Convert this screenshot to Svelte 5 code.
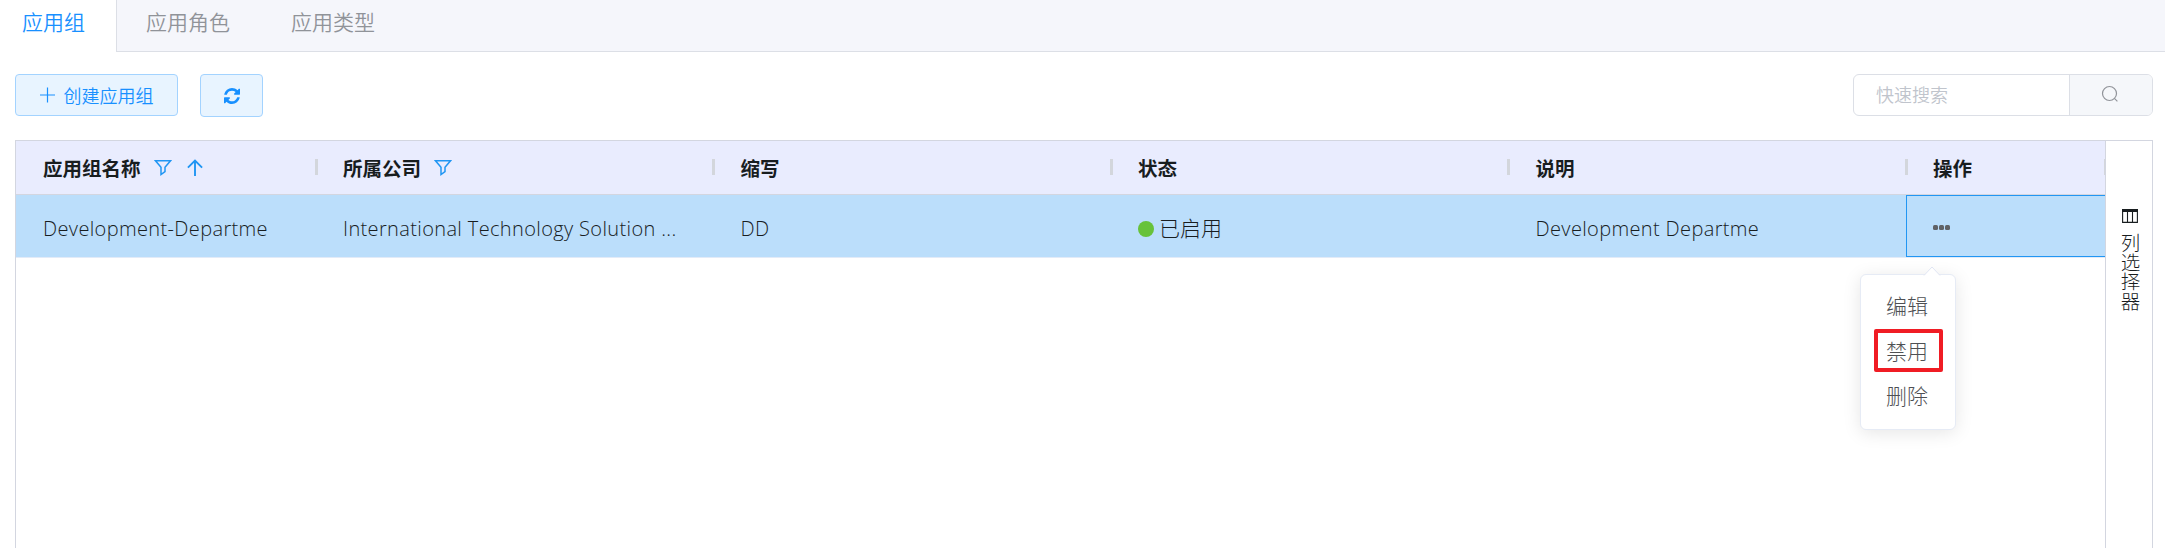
<script>
  const tabs = ['应用组', '应用角色', '应用类型'];
  const columns = [
    { title: '应用组名称', filter: true, sort: true, value: 'Development-Departme' },
    { title: '所属公司', filter: true, value: 'International Technology Solution ...' },
    { title: '缩写', value: 'DD' },
    { title: '状态', value: '已启用', status: true },
    { title: '说明', value: 'Development Departme' },
    { title: '操作', actions: true }
  ];
  const menu = ['编辑', '禁用', '删除'];
</script>

<div class="page">
  <nav class="tabs">
    {#each tabs as tab, i}
      <div class="tab" class:active={i === 0}>{tab}</div>
    {/each}
  </nav>

  <div class="toolbar">
    <button class="btn create">
      <svg width="16" height="16" viewBox="0 0 16 16"><path d="M7.500 .5v15M0 8h15" stroke="currentColor" stroke-width="1.2" fill="none" /></svg>
      <span>创建应用组</span>
    </button>
    <button class="btn refresh" aria-label="refresh">
      <svg width="16" height="16" viewBox="0 0 1536 1536"><path fill="currentColor" d="M1511 928q0 5-1 7-64 268-268 434.500T764 1536q-146 0-282.500-55T238 1324l-129 129q-19 19-45 19t-45-19-19-45V960q0-26 19-45t45-19h448q26 0 45 19t19 45-19 45l-137 137q71 66 161 102t187 36q134 0 250-65t186-179q11-17 53-117 8-23 30-23h192q13 0 22.500 9.500t9.500 22.500zm25-800v448q0 26-19 45t-45 19h-448q-26 0-45-19t-19-45 19-45l138-138Q969 256 768 256q-134 0-250 65T332 500q-11 17-53 117-8 23-30 23H50q-13 0-22.500-9.500T18 608v-7q65-268 270-434.500T768 0q146 0 284 55.500T1297 212l130-129q19-19 45-19t45 19 19 45z" /></svg>
    </button>
    <div class="search">
      <div class="field">快速搜索</div>
      <div class="go">
        <svg width="18" height="18" viewBox="0 0 18 18" fill="none" stroke="#909399" stroke-width="1.2"><circle cx="8.500" cy="8.500" r="7" /><path d="m13.400 13.400 3 3" /></svg>
      </div>
    </div>
  </div>

  <div class="grid">
    <div class="table">
      <div class="row head">
        {#each columns as col}
          <div class="cell">
            <span class="title">{col.title}</span>
            {#if col.filter}
              <svg class="filter" width="18" height="17" viewBox="0 0 18 17" fill="none" stroke="#2196f3" stroke-width="1.5"><path d="M1.500 1.800h15L11 8.300v4.200l-4 3V8.300z" /></svg>
            {/if}
            {#if col.sort}
              <svg class="sort" width="16" height="17" viewBox="0 0 16 17" fill="none" stroke="#2196f3" stroke-width="1.900"><path d="M8 17V2M.9 8.700 8 1.600l7.100 7.100" /></svg>
            {/if}
          </div>
        {/each}
      </div>
      <div class="row data">
        {#each columns as col}
          <div class="cell" class:focus={col.actions}>
            {#if col.actions}
              <div class="more"><i></i><i></i><i></i></div>
              <div class="menu">
                <svg class="caret" width="18" height="10" viewBox="0 0 18 10"><path d="M1 9.500 9 1l8 8.500" fill="#fff" stroke="#e0e5f3" /></svg>
                {#each menu as item, i}
                  <div class="item"><span class:marked={i === 1}>{item}</span></div>
                {/each}
              </div>
            {:else}
              {#if col.status}<i class="dot"></i>{/if}
              <span class="value" class:cjk={col.status}>{col.value}</span>
            {/if}
          </div>
        {/each}
      </div>
    </div>
    <aside class="side">
      <svg width="16" height="14" viewBox="0 0 16 14"><path d="M.6 1.500h14.800v11.900H.6zM5.500 3v10.500M10.500 3v10.500" fill="none" stroke="#181d1f" stroke-width="1.100" /><path d="M0 0h16v3H0z" fill="#181d1f" /></svg>
      <span>列选择器</span>
    </aside>
  </div>
</div>

<style>
  :global(body) { margin: 0; overflow: hidden; background: #fff; }
  .page {
    height: 548px;
    display: flex;
    flex-direction: column;
    overflow: hidden;
    font-family: 'Open Sans', 'Noto Sans CJK SC', sans-serif;
    font-weight: 350;
  }
  svg { display: block; flex: none; }
  .tabs {
    display: flex;
    height: 51px;
    flex: none;
    background: #f5f6fb;
    border-bottom: 1px solid #dcdfe6;
  }
  .tab {
    height: 43px;
    line-height: 43px;
    padding: 0 32px 0 29px;
    font-size: 21px;
    font-family: 'Noto Sans CJK SC', sans-serif;
    color: #909399;
  }
  .tab.active {
    width: 94px;
    height: 52px;
    padding: 0 0 0 22px;
    background: #fff;
    color: #1890ff;
    border-right: 1px solid #dcdfe6;
  }
  .toolbar {
    display: flex;
    flex: none;
    align-items: flex-start;
    padding: 22px 12px 0 15px;
    height: 88px;
    box-sizing: border-box;
  }
  .btn {
    display: flex;
    align-items: center;
    justify-content: center;
    box-sizing: border-box;
    padding: 0;
    border: 1px solid #a3d3ff;
    border-radius: 4px;
    background: #e8f4ff;
    color: #1890ff;
    font: 350 18px 'Noto Sans CJK SC', sans-serif;
  }
  .create { width: 163px; height: 42px; gap: 8px; }
  .refresh { width: 63px; height: 43px; margin-left: 22px; }
  .search {
    display: flex;
    margin-left: auto;
    width: 300px;
    height: 42px;
    box-sizing: border-box;
    border: 1px solid #dcdfe6;
    border-radius: 6px;
    overflow: hidden;
  }
  .field {
    flex: 1;
    padding-left: 22px;
    font: 350 18px/38px 'Noto Sans CJK SC', sans-serif;
    color: #c0c4cc;
  }
  .go {
    width: 83px;
    border-left: 1px solid #dcdfe6;
    background: #f5f7fa;
    display: flex;
    align-items: center;
    justify-content: center;
    padding: 0 2px 2px 0;
    box-sizing: border-box;
  }
  .grid {
    display: flex;
    flex: none;
    height: 420px;
    margin: 0 12px 0 15px;
    border: 1px solid #d3d6e0;
    box-sizing: border-box;
  }
  .table { width: 2089px; flex: none; }
  .row {
    display: grid;
    grid-template-columns: 300px repeat(4, 397.5px) 199px;
  }
  .head { height: 53px; background: #e9ecfe; border-bottom: 1px solid #d3d6e0; }
  .data { height: 62px; background: #bbdefb; border-bottom: 1px solid #e2ebf8; }
  .cell {
    display: flex;
    align-items: center;
    box-sizing: border-box;
    padding-left: 27px;
    min-width: 0;
    color: #181d1f;
    white-space: nowrap;
  }
  .head .cell {
    position: relative;
    font: 700 19.5px 'Noto Sans CJK SC', sans-serif;
  }
  .head .title { padding-bottom: 1px; }
  .head .cell::after {
    content: '';
    position: absolute;
    right: -1.5px;
    top: 18px;
    width: 3px;
    height: 16px;
    background: #d3d6dc;
  }
  .head .cell:last-child::after { right: 0; width: 1px; }
  .filter { margin: 0 0 1px 13px; }
  .sort { margin-left: 15px; }
  .value { font-size: 20px; padding-top: 5px; letter-spacing: 0.36px; }
  .value.cjk {
    font-family: 'Noto Sans CJK SC', sans-serif;
    font-size: 21px;
    font-weight: 300;
    padding-top: 2px;
    letter-spacing: 0;
  }
  .dot { width: 16px; height: 16px; border-radius: 50%; background: #67c23a; margin: 6px 5px 0 0; }
  .focus {
    position: relative;
    border: 1px solid #2196f3;
    border-right: 0;
    padding-left: 26px;
  }
  .more { display: flex; gap: 1px; padding-top: 3px; }
  .more i { width: 5px; height: 5px; border-radius: 1.5px; background: #606266; }
  .menu {
    position: absolute;
    left: -47px;
    top: 78px;
    width: 96px;
    height: 156px;
    box-sizing: border-box;
    padding: 8px 0;
    border: 1px solid #e6ebf5;
    border-radius: 6px;
    background: #fff;
    box-shadow: 0 3px 18px rgba(0, 0, 0, 0.1);
    font: 300 21px 'Noto Sans CJK SC', sans-serif;
    color: #4e5053;
  }
  .caret { position: absolute; left: 62px; top: -9px; }
  .item {
    display: flex;
    align-items: center;
    height: 45px;
    padding-left: 13px;
  }
  .item span { padding: 0 11px 0 8px; border: 4px solid transparent; line-height: 35px; }
  .item .marked { border-color: #f01c24; border-radius: 2px; }
  .side {
    flex: 1;
    display: flex;
    flex-direction: column;
    align-items: center;
    padding: 68px 0 0 2px;
    border-left: 1px solid #d3d6e0;
    font: 300 19.5px 'Noto Sans CJK SC', sans-serif;
    color: #181d1f;
  }
  .side span { writing-mode: vertical-rl; margin-top: 10px; line-height: 20px; }
</style>
